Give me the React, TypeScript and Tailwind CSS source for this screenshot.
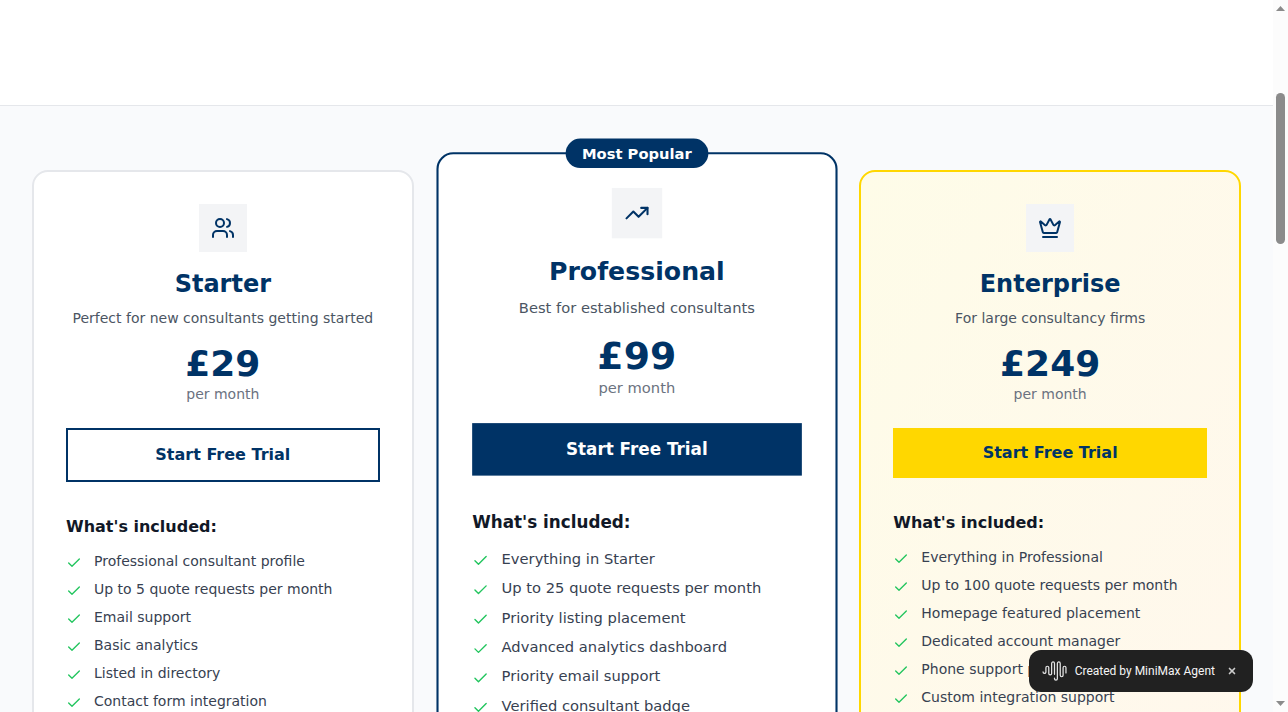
import { Check, Crown, TrendingUp, Users, X, type LucideIcon } from "lucide-react";

type Plan = {
  name: string;
  tagline: string;
  price: string;
  icon: LucideIcon;
  card: string;
  button: string;
  badge?: string;
  features: string[];
};

const plans: Plan[] = [
  {
    name: "Starter",
    tagline: "Perfect for new consultants getting started",
    price: "£29",
    icon: Users,
    card: "border-[#e5e7eb] bg-white",
    button: "border-2 border-[#003366] bg-white text-[#003366]",
    features: [
      "Professional consultant profile",
      "Up to 5 quote requests per month",
      "Email support",
      "Basic analytics",
      "Listed in directory",
      "Contact form integration",
    ],
  },
  {
    name: "Professional",
    tagline: "Best for established consultants",
    price: "£99",
    icon: TrendingUp,
    card: "scale-105 border-[#003366] bg-white",
    button: "bg-[#003366] text-white",
    badge: "Most Popular",
    features: [
      "Everything in Starter",
      "Up to 25 quote requests per month",
      "Priority listing placement",
      "Advanced analytics dashboard",
      "Priority email support",
      "Verified consultant badge",
    ],
  },
  {
    name: "Enterprise",
    tagline: "For large consultancy firms",
    price: "£249",
    icon: Crown,
    card: "border-[#ffd700] bg-linear-to-br/srgb from-[#fefce8] to-[#fff7ed]",
    button: "bg-[#ffd700] text-[#003366]",
    features: [
      "Everything in Professional",
      "Up to 100 quote requests per month",
      "Homepage featured placement",
      "Dedicated account manager",
      "Phone support priority",
      "Custom integration support",
    ],
  },
];

function PlanCard({ plan }: { plan: Plan }) {
  const Icon = plan.icon;
  return (
    <article className={`relative min-h-[711px] rounded-2xl border-2 p-8 ${plan.card}`}>
      {plan.badge && (
        <div className="absolute inset-x-0 -top-[15px] flex justify-center">
          <span className="rounded-full bg-[#003366] px-4 py-1 text-sm font-semibold text-white">
            {plan.badge}
          </span>
        </div>
      )}
      <div className="flex flex-col items-center text-center">
        <div className="mb-4 flex size-12 items-center justify-center bg-[#f3f4f6] text-[#003366]">
          <Icon size={24} />
        </div>
        <h3 className="mb-2 text-2xl font-bold text-[#003366]">{plan.name}</h3>
        <p className="mb-4 text-sm text-[#4b5563]">{plan.tagline}</p>
        <p className="text-4xl font-bold text-[#003366]">{plan.price}</p>
        <p className="mb-6 text-sm text-[#6b7280]">per month</p>
      </div>
      <button
        type="button"
        className={`mb-8 block w-full px-6 py-3 text-base leading-[26px] font-semibold ${plan.button}`}
      >
        Start Free Trial
      </button>
      <h4 className="mb-3 text-base leading-[25px] font-semibold text-[#111827]">What's included:</h4>
      <ul className="flex flex-col gap-2">
        {plan.features.map((feature) => (
          <li key={feature} className="flex items-start gap-3 text-sm text-[#374151]">
            <Check size={16} className="mt-1 shrink-0 text-[#22c55e]" />
            {feature}
          </li>
        ))}
      </ul>
    </article>
  );
}

function WaveLogo() {
  return (
    <svg width="25" height="21" viewBox="0 0 26 22" fill="none" stroke="#e5e5e5" strokeWidth="1.3" strokeLinecap="round">
      <path d="M1 11.500a1.500 1.500 0 0 0 3 0V7a1.500 1.500 0 0 1 3 0v6a1.500 1.500 0 0 0 3 0V2.500a1.500 1.500 0 0 1 3 0V14" />
      <path d="M13 18v.5a1.500 1.500 0 0 0 3 0v-16a1.500 1.500 0 0 1 3 0V15a1.500 1.500 0 0 0 3 0V7a1.500 1.500 0 0 1 3 0v5.500" />
    </svg>
  );
}

function ScrollRail() {
  return (
    <div aria-hidden="true" className="flex w-[15px] shrink-0 flex-col items-center bg-[#fcfcfc] py-1.5">
      <svg width="9" height="5" viewBox="0 0 9 5" fill="#8b8b8b">
        <path d="M4.500 0 9 5H0z" />
      </svg>
      <div className="mt-[82px] h-[151px] w-[9px] rounded-full bg-[#8b8b8b]" />
      <svg className="mt-auto" width="9" height="5" viewBox="0 0 9 5" fill="#8b8b8b">
        <path d="M0 0h9L4.500 5z" />
      </svg>
    </div>
  );
}

export default function App() {
  return (
    <div className="flex h-screen overflow-hidden bg-white font-['DejaVu_Sans',sans-serif]">
      <main className="relative min-w-0 flex-1 overflow-hidden">
        <div className="h-[106px] border-b border-[#e5e7eb] bg-white" />
        <section className="bg-[#f9fafc] px-8 py-16">
          <div className="grid grid-cols-3 gap-8">
            {plans.map((plan) => (
              <PlanCard key={plan.name} plan={plan} />
            ))}
          </div>
        </section>
        <div className="fixed right-[35px] bottom-5 flex h-[42px] items-center rounded-xl bg-[#212121] pr-4 pl-[13px] font-[Roboto,sans-serif] text-xs text-[#f5f5f5]">
          <WaveLogo />
          <span className="ml-2">Created by MiniMax Agent</span>
          <button type="button" aria-label="Close" className="ml-3 text-[#cccccc]">
            <X size={10} strokeWidth={4} />
          </button>
        </div>
      </main>
      <ScrollRail />
    </div>
  );
}
